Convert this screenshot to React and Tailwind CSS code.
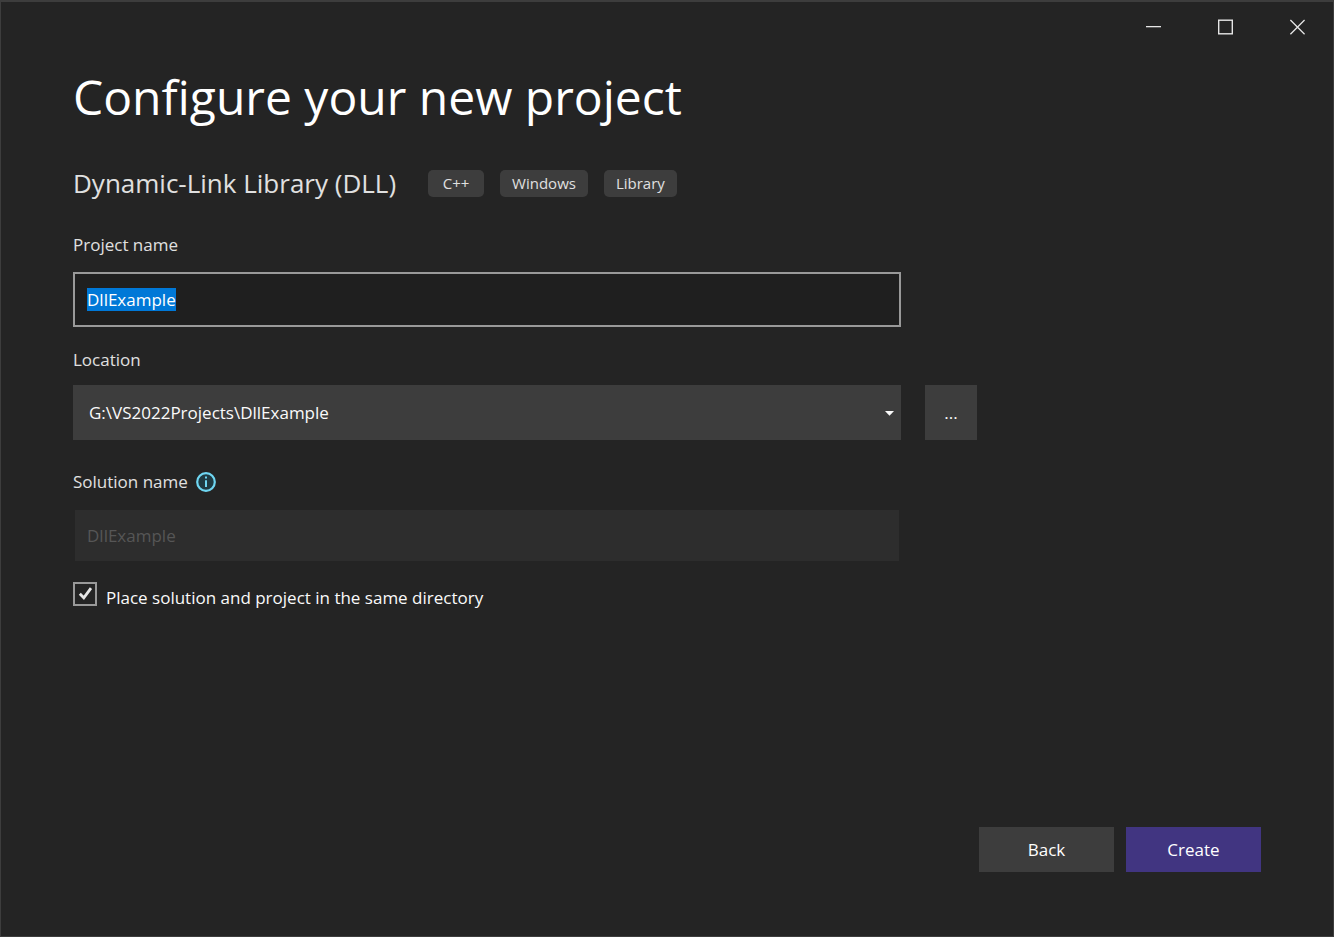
import { useEffect, useRef, useState } from "react";

const TAGS = ["C++", "Windows", "Library"];

const caption = "flex h-full w-[72px] items-center justify-center text-[#e6e6e6] hover:bg-[#3d3d3d]";

function TitleBar() {
  return (
    <header className="flex h-[50px] justify-end">
      <button type="button" aria-label="Minimize" className={caption}>
        <svg viewBox="0 0 16 16" className="h-4 w-4" fill="currentColor" aria-hidden="true">
          <path d="M1 7h15v1.3H1z" />
        </svg>
      </button>
      <button type="button" aria-label="Maximize" className={caption}>
        <svg viewBox="0 0 16 16" className="h-4 w-4" fill="none" stroke="currentColor" strokeWidth="1.4" aria-hidden="true">
          <rect x="1.7" y="1.2" width="13.6" height="13.6" />
        </svg>
      </button>
      <button type="button" aria-label="Close" className={caption}>
        <svg viewBox="0 0 16 16" className="h-4 w-4" fill="none" stroke="currentColor" strokeWidth="1.3" aria-hidden="true">
          <path d="M1.4 1l14.2 14.2M15.6 1L1.4 15.2" />
        </svg>
      </button>
    </header>
  );
}

export default function App() {
  const [name, setName] = useState("DllExample");
  const [sameDir, setSameDir] = useState(true);
  const nameRef = useRef(null);

  useEffect(() => {
    nameRef.current.focus();
    nameRef.current.select();
  }, []);

  return (
    <div className="flex min-h-screen flex-col border border-t-2 border-[#3d3d3d] bg-[#242424] font-['Open_Sans',sans-serif] text-[17px] leading-[26px] text-[#e0e0e0]">
      <TitleBar />

      <form className="flex flex-1 flex-col px-[72px] pt-[13px] pb-16" onSubmit={(e) => e.preventDefault()}>
        <h1 className="text-[48px] leading-[64px] text-white">Configure your new project</h1>

        <div className="mt-9 flex flex-wrap items-center gap-x-8 gap-y-2">
          <h2 className="text-[26px] leading-9">Dynamic-Link Library (DLL)</h2>
          <ul className="flex gap-4 text-[15px] leading-[27px]">
            {TAGS.map((tag) => (
              <li key={tag} className="min-w-[56px] rounded-[5px] bg-[#3d3d3d] px-3 text-center">
                {tag}
              </li>
            ))}
          </ul>
        </div>

        {/* Fields */}
        <div className="mt-[31px] grid max-w-[904px] grid-cols-[1fr_52px] gap-x-6">
          <label htmlFor="project-name">Project name</label>
          <input
            id="project-name"
            ref={nameRef}
            value={name}
            onChange={(e) => setName(e.target.value)}
            spellCheck={false}
            className="col-start-1 mt-[14px] h-[55px] border-2 border-[#999999] bg-[#1f1f1f] px-3 text-white outline-none selection:bg-[#0078d7] selection:text-white"
          />

          <label htmlFor="location" className="col-start-1 mt-5">
            Location
          </label>
          <div className="relative col-start-1 mt-3">
            <select
              id="location"
              className="h-[55px] w-full appearance-none bg-[#3d3d3d] px-4 text-[#fafafa] outline-none"
            >
              <option>G:\VS2022Projects\DllExample</option>
            </select>
            <svg
              viewBox="0 0 9 5"
              className="pointer-events-none absolute top-[26px] right-[7px] h-[5px] w-[9px]"
              fill="#fafafa"
              aria-hidden="true"
            >
              <path d="M0 0h9L4.5 4.8z" />
            </svg>
          </div>
          <button type="button" aria-label="Browse" className="mt-3 h-[55px] bg-[#3d3d3d] text-[#fafafa]">
            ...
          </button>

          <div className="col-start-1 mt-[29px] flex items-center gap-2">
            <label htmlFor="solution-name">Solution name</label>
            <svg viewBox="0 0 20 20" className="h-5 w-5" aria-hidden="true">
              <circle cx="10" cy="10" r="8.8" fill="#1f3a42" stroke="#6fd6f2" strokeWidth="2.2" />
              <path d="M9 4.6h2v2H9zM9 8.2h2v6.8H9z" fill="#6fd6f2" />
            </svg>
          </div>
          <input
            id="solution-name"
            value={name}
            disabled
            className="col-start-1 mx-[2px] mt-[15px] h-[51px] bg-[#2d2d2d] px-3 text-[#565656]"
          />
        </div>

        <div className="mt-5 flex gap-[9px]">
          <span className="relative mt-px h-6 w-6">
            <input
              id="same-directory"
              type="checkbox"
              checked={sameDir}
              onChange={(e) => setSameDir(e.target.checked)}
              className="peer block h-6 w-6 appearance-none border-2 border-[#999999] bg-[#242424]"
            />
            <svg
              viewBox="0 0 24 24"
              className="pointer-events-none absolute inset-0 hidden h-6 w-6 peer-checked:block"
              fill="none"
              stroke="#e6e6e6"
              strokeWidth="2.8"
              aria-hidden="true"
            >
              <path d="M6.8 11.8l4 4L18 6.2" />
            </svg>
          </span>
          <label htmlFor="same-directory" className="mt-1 text-[#fafafa]">
            Place solution and project in the same directory
          </label>
        </div>

        {/* Footer actions */}
        <div className="mt-auto flex justify-end gap-3 pt-8 text-white">
          <button type="button" className="h-[45px] w-[135px] bg-[#3d3d3d]">
            Back
          </button>
          <button type="submit" className="h-[45px] w-[135px] bg-[#413581]">
            Create
          </button>
        </div>
      </form>
    </div>
  );
}
